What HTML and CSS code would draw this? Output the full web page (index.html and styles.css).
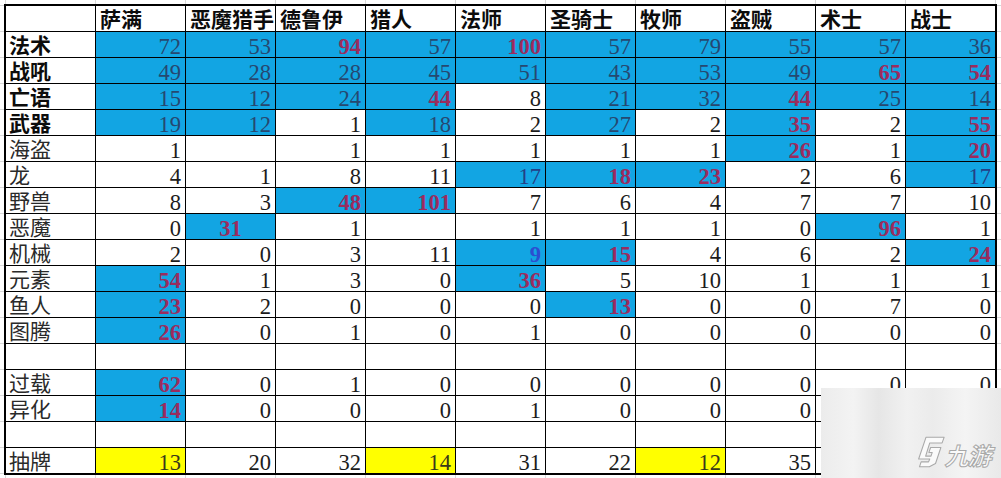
FILE: index.html
```html
<!DOCTYPE html>
<html lang="zh">
<head>
<meta charset="utf-8">
<title>职业关键词统计</title>
<link rel="stylesheet" href="styles.css">
</head>
<body>
<div class="sheet">
  <div class="grid">
    <div class="c"></div><div class="c hd">萨满</div><div class="c hd">恶魔猎手</div><div class="c hd">德鲁伊</div><div class="c hd">猎人</div><div class="c hd">法师</div><div class="c hd">圣骑士</div><div class="c hd">牧师</div><div class="c hd">盗贼</div><div class="c hd">术士</div><div class="c hd">战士</div>

    <div class="c lab bold">法术</div><div class="c n b">72</div><div class="c n b">53</div><div class="c n b r">94</div><div class="c n b">57</div><div class="c n b r">100</div><div class="c n b">57</div><div class="c n b">79</div><div class="c n b">55</div><div class="c n b">57</div><div class="c n b">36</div>

    <div class="c lab bold">战吼</div><div class="c n b">49</div><div class="c n b">28</div><div class="c n b">28</div><div class="c n b">45</div><div class="c n b">51</div><div class="c n b">43</div><div class="c n b">53</div><div class="c n b">49</div><div class="c n b r">65</div><div class="c n b r">54</div>

    <div class="c lab bold">亡语</div><div class="c n b">15</div><div class="c n b">12</div><div class="c n b">24</div><div class="c n b r">44</div><div class="c n">8</div><div class="c n b">21</div><div class="c n b">32</div><div class="c n b r">44</div><div class="c n b">25</div><div class="c n b">14</div>

    <div class="c lab bold">武器</div><div class="c n b">19</div><div class="c n b">12</div><div class="c n">1</div><div class="c n b">18</div><div class="c n">2</div><div class="c n b">27</div><div class="c n">2</div><div class="c n b r">35</div><div class="c n">2</div><div class="c n b r">55</div>

    <div class="c lab">海盗</div><div class="c n">1</div><div class="c n"></div><div class="c n">1</div><div class="c n">1</div><div class="c n">1</div><div class="c n">1</div><div class="c n">1</div><div class="c n b r">26</div><div class="c n">1</div><div class="c n b r">20</div>

    <div class="c lab">龙</div><div class="c n">4</div><div class="c n">1</div><div class="c n">8</div><div class="c n">11</div><div class="c n b d">17</div><div class="c n b r">18</div><div class="c n b r">23</div><div class="c n">2</div><div class="c n">6</div><div class="c n b d">17</div>

    <div class="c lab">野兽</div><div class="c n">8</div><div class="c n">3</div><div class="c n b r">48</div><div class="c n b r">101</div><div class="c n">7</div><div class="c n">6</div><div class="c n">4</div><div class="c n">7</div><div class="c n">7</div><div class="c n">10</div>

    <div class="c lab">恶魔</div><div class="c n">0</div><div class="c n b r ctr">31</div><div class="c n">1</div><div class="c n"></div><div class="c n">1</div><div class="c n">1</div><div class="c n">1</div><div class="c n">0</div><div class="c n b r">96</div><div class="c n">1</div>

    <div class="c lab">机械</div><div class="c n">2</div><div class="c n">0</div><div class="c n">3</div><div class="c n">11</div><div class="c n b u">9</div><div class="c n b r">15</div><div class="c n">4</div><div class="c n">6</div><div class="c n">2</div><div class="c n b r">24</div>

    <div class="c lab">元素</div><div class="c n b r">54</div><div class="c n">1</div><div class="c n">3</div><div class="c n">0</div><div class="c n b r">36</div><div class="c n">5</div><div class="c n">10</div><div class="c n">1</div><div class="c n">1</div><div class="c n">1</div>

    <div class="c lab">鱼人</div><div class="c n b r">23</div><div class="c n">2</div><div class="c n">0</div><div class="c n">0</div><div class="c n">0</div><div class="c n b r">13</div><div class="c n">0</div><div class="c n">0</div><div class="c n">7</div><div class="c n">0</div>

    <div class="c lab">图腾</div><div class="c n b r">26</div><div class="c n">0</div><div class="c n">1</div><div class="c n">0</div><div class="c n">1</div><div class="c n">0</div><div class="c n">0</div><div class="c n">0</div><div class="c n">0</div><div class="c n">0</div>

    <div class="c"></div><div class="c"></div><div class="c"></div><div class="c"></div><div class="c"></div><div class="c"></div><div class="c"></div><div class="c"></div><div class="c"></div><div class="c"></div><div class="c"></div>

    <div class="c lab">过载</div><div class="c n b r">62</div><div class="c n">0</div><div class="c n">1</div><div class="c n">0</div><div class="c n">0</div><div class="c n">0</div><div class="c n">0</div><div class="c n">0</div><div class="c n">0</div><div class="c n">0</div>

    <div class="c lab">异化</div><div class="c n b r">14</div><div class="c n">0</div><div class="c n">0</div><div class="c n">0</div><div class="c n">1</div><div class="c n">0</div><div class="c n">0</div><div class="c n">0</div><div class="c n">0</div><div class="c n">0</div>

    <div class="c"></div><div class="c"></div><div class="c"></div><div class="c"></div><div class="c"></div><div class="c"></div><div class="c"></div><div class="c"></div><div class="c"></div><div class="c"></div><div class="c"></div>

    <div class="c lab">抽牌</div><div class="c n y">13</div><div class="c n">20</div><div class="c n">32</div><div class="c n y">14</div><div class="c n">31</div><div class="c n">22</div><div class="c n y">12</div><div class="c n">35</div><div class="c n"></div><div class="c n"></div>
  </div>

  <div class="wm">
    <svg class="wm-icon" viewBox="0 0 34 38" width="28" height="32" aria-hidden="true">
      <path d="M11 1 L33 1 L30.5 8 L15.5 8 L10.5 24 L17 24 L18.5 19.5 L14.5 19.5 L16.5 13.5 L29 13.5 L22.5 33 L15 37 L3 37 L5 31 L14 31 L15.5 27.5 L2 27.5 Z" fill="#fafafa" stroke="#a9a9a9" stroke-width="1.3" stroke-linejoin="round"/>
    </svg>
    <span class="wm-text">九游</span>
  </div>
</div>
</body>
</html>
```
FILE: styles.css
```css
html, body {
  margin: 0;
  padding: 0;
}

body {
  width: 1001px;
  height: 478px;
  overflow: hidden;
  background-color: #ffffff;
  background-image:
    linear-gradient(to right, #d8d8d8 1px, transparent 1px),
    linear-gradient(to bottom, #d8d8d8 1px, transparent 1px);
  background-size: 90px 100%, 100% 26px;
  background-position: 5px 0, 0 5px;
}

.sheet {
  position: relative;
  width: 1001px;
  height: 478px;
  padding: 4px 0 0 4px;
  box-sizing: border-box;
}

.grid {
  display: grid;
  grid-template-columns: repeat(11, 89px);
  grid-template-rows: repeat(18, 25px);
  gap: 1px;
  padding: 2px;
  background: #000;
  width: max-content;
}

.c {
  background: #fff;
  display: flex;
  align-items: flex-end;
  white-space: nowrap;
  color: #161616;
  min-width: 0;
}

.hd, .lab {
  font-family: "Liberation Serif", "Noto Sans CJK SC", serif;
  font-size: 21px;
  line-height: 21px;
  justify-content: flex-start;
}

.hd {
  font-weight: 700;
  padding-left: 4px;
  color: #0c0c0c;
}

.lab {
  padding-left: 3px;
  font-weight: 400;
  color: #2a2a2a;
}

.lab.bold {
  font-weight: 700;
  color: #0c0c0c;
}

.n {
  font-family: "Liberation Serif", "Times New Roman", serif;
  font-size: 22.5px;
  line-height: 21px;
  justify-content: flex-end;
  padding-right: 4px;
  color: #1c1c1c;
}

.b {
  background: #12a5e3;
  color: #264870;
}

.y {
  background: #ffff00;
  color: #3a3a1a;
}

.r {
  font-weight: 700;
  color: #9a2c5e;
}

.d {
  color: #243f86;
}

.u {
  font-weight: 700;
  color: #2c4fd0;
}

.ctr {
  justify-content: center;
  padding-right: 0;
}

.wm {
  position: absolute;
  left: 821px;
  top: 388px;
  width: 180px;
  height: 90px;
  background:
    linear-gradient(to right, #ececec 0%, #f3f3f3 18%, #e6e6e6 32%, #f1f1f1 48%, #ebebeb 62%, #f4f4f4 80%, #e9e9e9 100%);
  display: flex;
  align-items: flex-end;
  justify-content: flex-end;
  gap: 2px;
  padding: 0 8px 10px 0;
  box-sizing: border-box;
}

.wm-icon {
  display: block;
}

.wm-text {
  font-family: "Noto Sans CJK SC", sans-serif;
  font-size: 24px;
  line-height: 26px;
  font-weight: 700;
  color: #fafafa;
  -webkit-text-stroke: 1px #a8a8a8;
  transform: skewX(-14deg);
  letter-spacing: -1px;
}
```
